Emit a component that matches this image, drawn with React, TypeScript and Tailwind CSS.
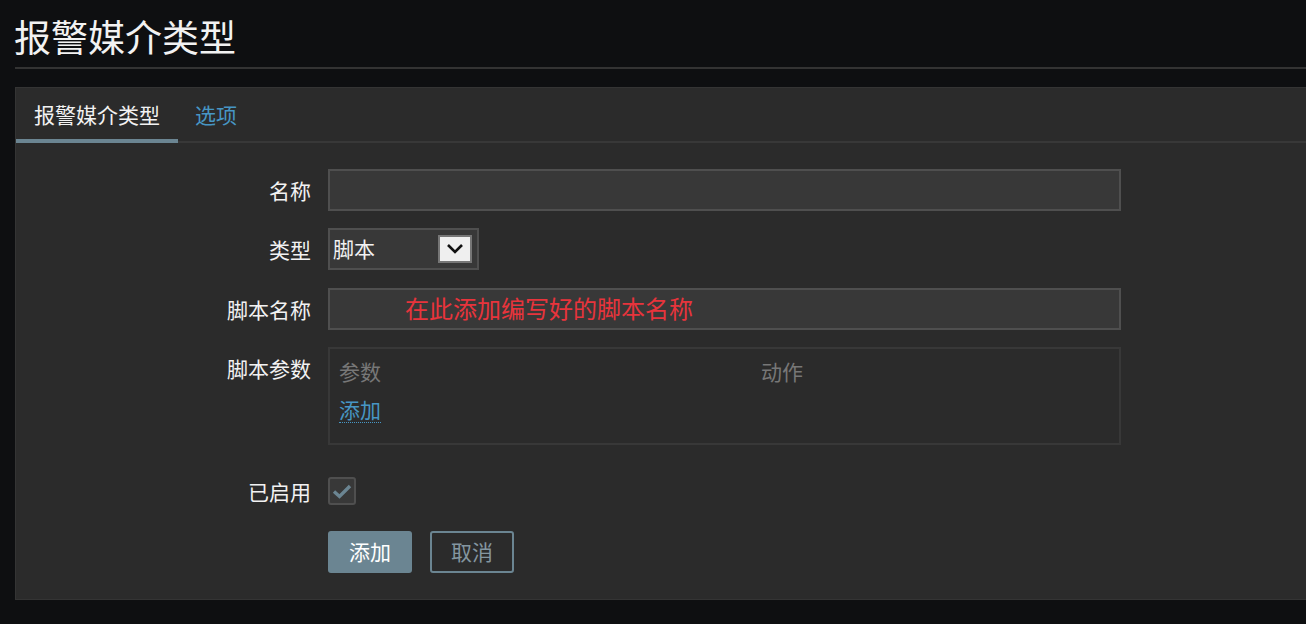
import React from 'react';

const font = { fontFamily: '"Noto Sans CJK SC", "Noto Sans", sans-serif' };

function Row({ label, children, top = false }: { label: string; children: React.ReactNode; top?: boolean }) {
  return (
    <div className={`flex gap-[17px] ${top ? 'items-start' : 'items-center'}`}>
      <div className="w-[295px] text-right text-[21px] leading-[42px] text-[#f2f2f2]">{label}</div>
      {children}
    </div>
  );
}

function ChevronDown() {
  return (
    <svg width="18" height="12" viewBox="0 0 18 12">
      <polyline points="2,2 9,9 16,2" fill="none" stroke="#111" strokeWidth="2.6" />
    </svg>
  );
}

export default function App() {
  return (
    <div className="min-h-[624px] w-[1306px] overflow-hidden bg-[#0e0f11]" style={font}>
      <div className="ml-[15px] pt-[11px] pb-[6px] border-b-2 border-[#333]">
        <h1 className="text-[37px] leading-[50px] text-[#f2f2f2] -ml-[1px]">报警媒介类型</h1>
      </div>

      <div className="ml-[15px] mt-[18px] bg-[#2b2b2b] border-t border-l border-b border-[#343434] pb-[26px]">
        <div className="flex border-b-2 border-[#383838]">
          <div className="-mb-[2px] px-[18px] pt-[12px] pb-[11px] border-b-4 border-[#6b8592] text-[21px] leading-[28px] text-[#f2f2f2]">
            报警媒介类型
          </div>
          <div className="-mb-[2px] px-[17px] pt-[12px] pb-[11px] border-b-4 border-transparent text-[21px] leading-[28px] text-[#4796c4]">
            选项
          </div>
        </div>

        <div className="pt-[26px] flex flex-col">
          <Row label="名称">
            <div className="w-[793px] h-[42px] border-2 border-[#4f4f4f] bg-[#383838]" />
          </Row>

          <div className="mt-[17px]">
            <Row label="类型">
              <div className="w-[151px] h-[42px] border-2 border-[#4f4f4f] bg-[#383838] flex items-center justify-between pl-[3px] pr-[5px]">
                <span className="text-[21px] leading-[28px] text-[#f2f2f2] -mt-[2px]">脚本</span>
                <div className="w-[34px] h-[28px] bg-[#efefef] border-2 border-[#767676] flex items-center justify-center">
                  <ChevronDown />
                </div>
              </div>
            </Row>
          </div>

          <div className="mt-[18px]">
            <Row label="脚本名称">
              <div className="w-[793px] h-[42px] border-2 border-[#4f4f4f] bg-[#383838] flex items-center pl-[75px]">
                <span className="text-[24px] leading-[30px] text-[#e8343c] -mt-[2px]">在此添加编写好的脚本名称</span>
              </div>
            </Row>
          </div>

          <div className="mt-[17px]">
            <Row label="脚本参数" top>
              <div className="w-[793px] h-[98px] border-2 border-[#383838] px-[9px] pt-[9px]">
                <div className="flex text-[21px] leading-[26px] text-[#777]">
                  <div className="w-[422px]">参数</div>
                  <div>动作</div>
                </div>
                <div className="mt-[12px] flex">
                  <span className="text-[21px] leading-[26px] text-[#4796c4] border-b border-dotted border-[#4796c4]">添加</span>
                </div>
              </div>
            </Row>
          </div>

          <div className="mt-[32px]">
            <div className="flex gap-[17px] items-center h-[28px]">
              <div className="w-[295px] text-right text-[21px] leading-[28px] text-[#f2f2f2]">已启用</div>
              <div className="w-[28px] h-[28px] rounded-[3px] border-2 border-[#4f4f4f] bg-[#383838] flex items-center justify-center">
                <svg width="20" height="15" viewBox="0 0 20 15">
                  <polyline points="2,7.5 7.5,12.5 18,2" fill="none" stroke="#6b8592" strokeWidth="3.4" />
                </svg>
              </div>
            </div>
          </div>

          <div className="mt-[26px] flex gap-[18px] pl-[312px]">
            <button className="w-[84px] h-[42px] rounded-[3px] bg-[#6b8592] text-[21px] text-white">添加</button>
            <button className="w-[84px] h-[42px] rounded-[3px] border-2 border-[#6b8592] text-[21px] text-[#8496a0]">取消</button>
          </div>
        </div>
      </div>
    </div>
  );
}
